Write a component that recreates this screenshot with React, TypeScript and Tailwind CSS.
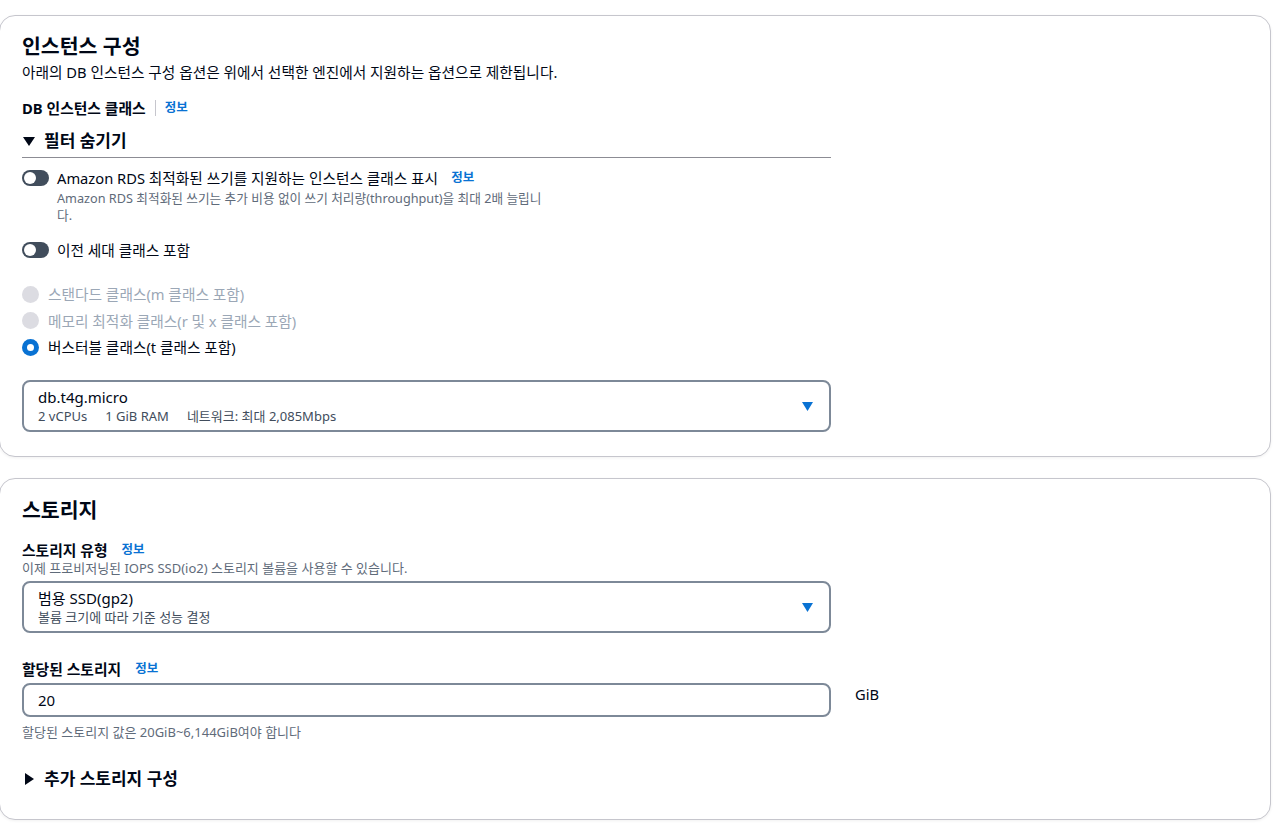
import React from "react";

const FONT = "font-['Noto_Sans','Noto_Sans_CJK_KR',sans-serif]";

export default function App() {
  return (
    <div
      className={`${FONT} min-h-[825px] w-[1280px] overflow-hidden bg-white pt-[15px] text-[#000716]`}
    >
      <InstanceCard />
      <StorageCard />
    </div>
  );
}

function Card({
  children,
  className,
}: {
  children: React.ReactNode;
  className?: string;
}) {
  return (
    <section
      className={[
        "ml-[-1px] w-[1272px] rounded-2xl border border-[#c6c6cd] bg-white pl-[22px] shadow-[0_1px_3px_rgba(0,7,22,0.06)]",
        className,
      ].join(" ")}
    >
      {children}
    </section>
  );
}

function Info({ className }: { className?: string }) {
  return (
    <span
      className={[
        "text-[12.5px] font-bold leading-[20px] text-[#0972d3]",
        className,
      ].join(" ")}
    >
      정보
    </span>
  );
}

function InstanceCard() {
  return (
    <Card className="pt-[18px] pb-[24px]">
      <h2 className="text-[20.5px] font-bold leading-[24px]">인스턴스 구성</h2>
      <p className="mt-[4px] text-[14.7px] leading-[20px]">
        아래의 DB 인스턴스 구성 옵션은 위에서 선택한 엔진에서 지원하는 옵션으로
        제한됩니다.
      </p>

      <div className="mt-[16px] flex items-center text-[14.8px] font-bold leading-[20px]">
        <span>DB 인스턴스 클래스</span>
        <span className="ml-[9px] h-[16px] w-px bg-[#c6c6cd]" />
        <Info className="ml-[9px]" />
      </div>

      <div className="mt-[12px] w-[809px] border-b border-[#8c8c94] pb-[5px]">
        <div className="flex items-center text-[17px] font-bold leading-[22px]">
          <svg width="12" height="9" viewBox="0 0 12 9" className="ml-[1px]">
            <path d="M0 0 H12 L6 9 Z" fill="#000716" />
          </svg>
          <span className="ml-[9px]">필터 숨기기</span>
        </div>
      </div>

      <div className="mt-[10px] flex items-center text-[14.7px] leading-[20px]">
        <Toggle />
        <span className="ml-[8px]">
          Amazon RDS 최적화된 쓰기를 지원하는 인스턴스 클래스 표시
        </span>
        <Info className="ml-[13px]" />
      </div>
      <p className="mt-[2px] ml-[35px] w-[492px] text-[12.7px] leading-[17px] text-[#5f6b7a]">
        Amazon RDS 최적화된 쓰기는 추가 비용 없이 쓰기 처리량(throughput)을
        최대 2배 늘립니다.
      </p>

      <div className="mt-[16px] flex items-center text-[14.7px] leading-[20px]">
        <Toggle />
        <span className="ml-[8px]">이전 세대 클래스 포함</span>
      </div>

      <div className="mt-[24px] flex flex-col gap-[6.5px] text-[14.7px] leading-[20px]">
        <Radio label="스탠다드 클래스(m 클래스 포함)" disabled />
        <Radio label="메모리 최적화 클래스(r 및 x 클래스 포함)" disabled />
        <Radio label="버스터블 클래스(t 클래스 포함)" checked />
      </div>

      <Select
        className="mt-[23px]"
        title="db.t4g.micro"
        sub={
          <span className="flex gap-[18px]">
            <span>2 vCPUs</span>
            <span>1 GiB RAM</span>
            <span>네트워크: 최대 2,085Mbps</span>
          </span>
        }
      />
    </Card>
  );
}

function StorageCard() {
  return (
    <Card className="mt-[21px] pt-[19px] pb-[29px]">
      <h2 className="text-[20.5px] font-bold leading-[24px]">스토리지</h2>

      <div className="mt-[18px] flex items-center text-[14.8px] font-bold leading-[20px]">
        <span>스토리지 유형</span>
        <Info className="ml-[14px]" />
      </div>
      <p className="text-[13px] leading-[16px] text-[#5f6b7a]">
        이제 프로비저닝된 IOPS SSD(io2) 스토리지 볼륨을 사용할 수 있습니다.
      </p>

      <Select
        className="mt-[5px]"
        title="범용 SSD(gp2)"
        sub="볼륨 크기에 따라 기준 성능 결정"
      />

      <div className="mt-[26px] flex items-center text-[14.8px] font-bold leading-[20px]">
        <span>할당된 스토리지</span>
        <Info className="ml-[14px]" />
      </div>

      <div className="mt-[4px] flex items-start">
        <div className="flex h-[34px] w-[809px] items-center rounded-lg border-2 border-[#7d8998] px-[14px] text-[15px]">
          20
        </div>
        <span className="ml-[24px] mt-[1px] text-[14.7px] leading-[20px]">
          GiB
        </span>
      </div>
      <p className="mt-[7px] text-[13px] leading-[16px] text-[#5f6b7a]">
        할당된 스토리지 값은 20GiB~6,144GiB여야 합니다
      </p>

      <div className="mt-[28px] flex items-center text-[17px] font-bold leading-[22px]">
        <svg width="9" height="12" viewBox="0 0 9 12" className="ml-[3px]">
          <path d="M0 0 V12 L9 6 Z" fill="#000716" />
        </svg>
        <span className="ml-[10px]">추가 스토리지 구성</span>
      </div>
    </Card>
  );
}

function Toggle() {
  return (
    <span className="flex h-[16px] w-[27px] items-center rounded-full bg-[#414d5c] px-[2px]">
      <span className="h-[12px] w-[12px] rounded-full bg-white" />
    </span>
  );
}

function Radio({
  label,
  disabled,
  checked,
}: {
  label: string;
  disabled?: boolean;
  checked?: boolean;
}) {
  return (
    <div className="flex items-center">
      {checked ? (
        <span className="flex h-[17px] w-[17px] items-center justify-center rounded-full bg-[#0972d3]">
          <span className="h-[7px] w-[7px] rounded-full bg-white" />
        </span>
      ) : (
        <span className="h-[17px] w-[17px] rounded-full bg-[#dcdce2]" />
      )}
      <span
        className={["ml-[9px]", disabled ? "text-[#9ba7b6]" : ""].join(" ")}
      >
        {label}
      </span>
    </div>
  );
}

function Select({
  title,
  sub,
  className,
}: {
  title: string;
  sub: React.ReactNode;
  className?: string;
}) {
  return (
    <div
      className={[
        "flex h-[52px] w-[809px] items-center justify-between rounded-lg border-2 border-[#7d8998] pl-[14px] pr-[16px]",
        className,
      ].join(" ")}
    >
      <div>
        <div className="text-[15px] leading-[20px]">{title}</div>
        <div className="text-[13px] leading-[18px] text-[#414d5c]">{sub}</div>
      </div>
      <svg width="11" height="9" viewBox="0 0 11 9">
        <path d="M0 0 H11 L5.5 9 Z" fill="#0972d3" />
      </svg>
    </div>
  );
}
